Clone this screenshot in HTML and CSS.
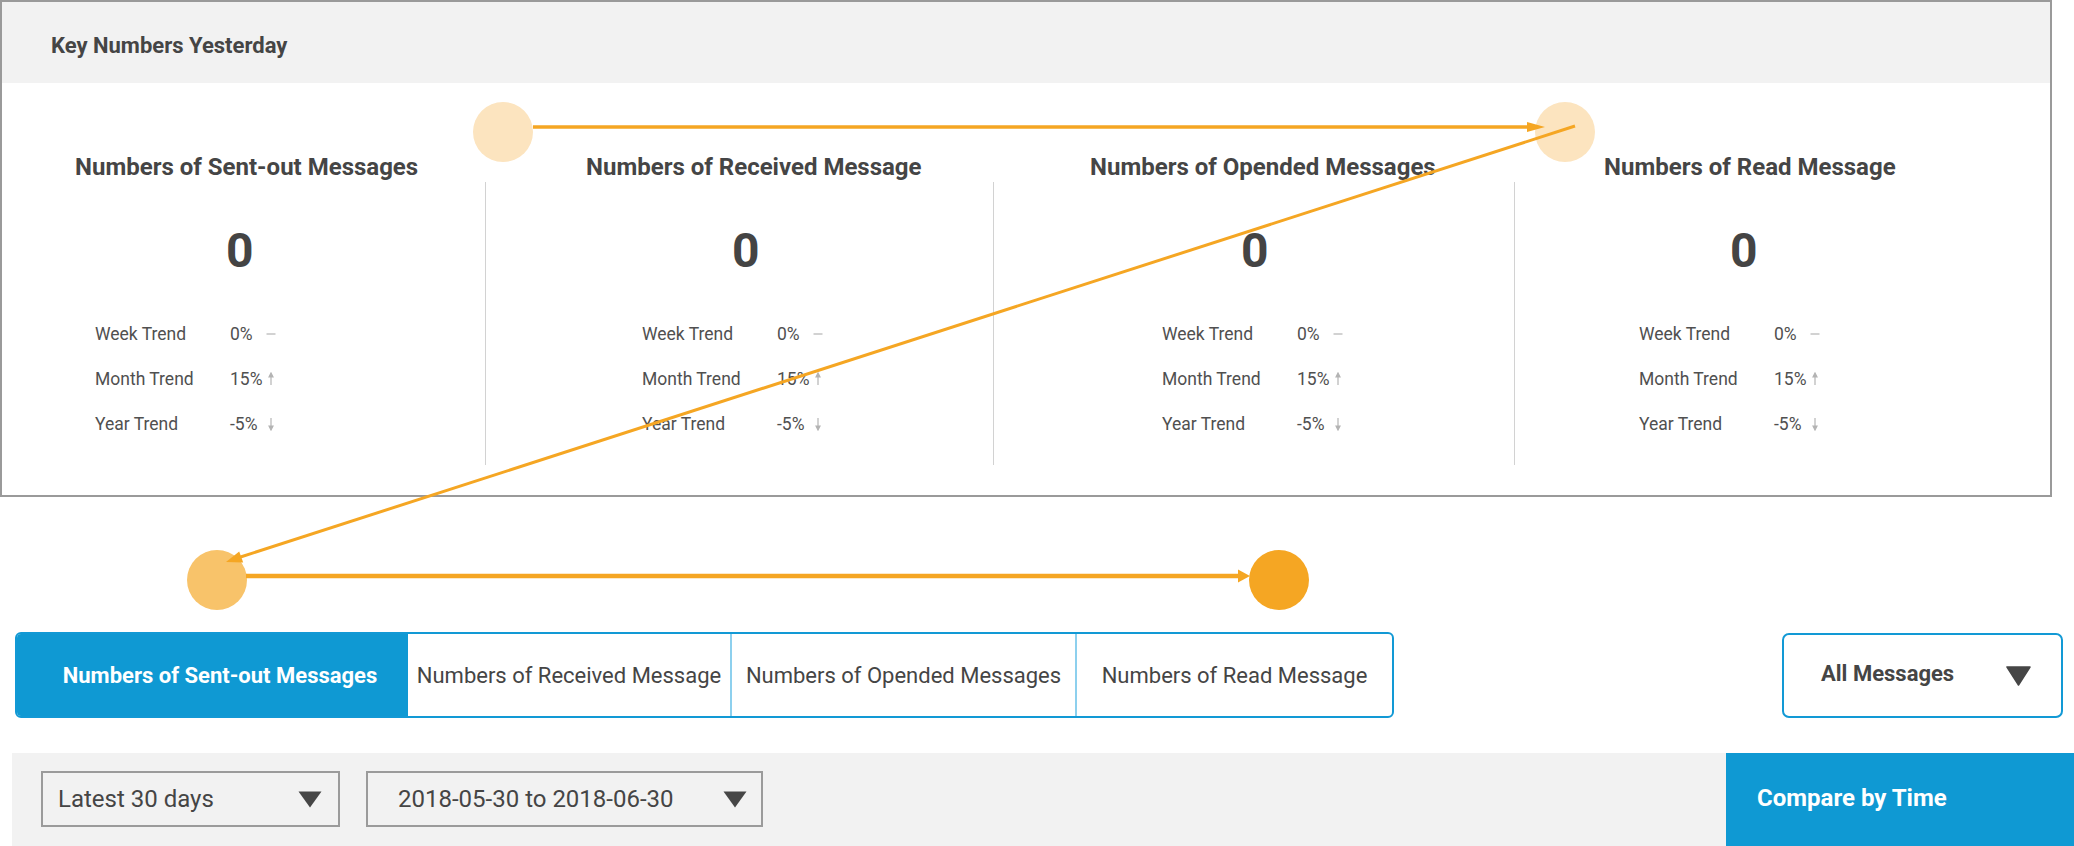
FILE: index.html
```html
<!DOCTYPE html>
<html lang="en">
<head>
<meta charset="utf-8">
<title>Key Numbers</title>
<link rel="stylesheet" href="styles.css">
</head>
<body>
<section class="card">
  <header class="card-head">Key Numbers Yesterday</header>
  <div class="stats">
    <div class="stat col-1">
      <h3 class="stat-title">Numbers of Sent-out Messages</h3>
      <div class="stat-body">
        <div class="stat-value">0</div>
        <div class="trends">
          <span class="t-label">Week Trend</span><span class="t-val">0%</span><svg class="t-icon" viewBox="0 0 10 14"><line x1="0.5" y1="7" x2="9.5" y2="7"/></svg>
          <span class="t-label">Month Trend</span><span class="t-val">15%</span><svg class="t-icon" viewBox="0 0 10 14"><line x1="5" y1="4" x2="5" y2="13"/><polygon points="3,5 5,1 7,5"/></svg>
          <span class="t-label">Year Trend</span><span class="t-val">-5%</span><svg class="t-icon" viewBox="0 0 10 14"><line x1="5" y1="1" x2="5" y2="10"/><polygon points="3,9 5,13 7,9"/></svg>
        </div>
      </div>
    </div>
    <div class="stat col-2">
      <h3 class="stat-title">Numbers of Received Message</h3>
      <div class="stat-body">
        <div class="stat-value">0</div>
        <div class="trends">
          <span class="t-label">Week Trend</span><span class="t-val">0%</span><svg class="t-icon" viewBox="0 0 10 14"><line x1="0.5" y1="7" x2="9.5" y2="7"/></svg>
          <span class="t-label">Month Trend</span><span class="t-val">15%</span><svg class="t-icon" viewBox="0 0 10 14"><line x1="5" y1="4" x2="5" y2="13"/><polygon points="3,5 5,1 7,5"/></svg>
          <span class="t-label">Year Trend</span><span class="t-val">-5%</span><svg class="t-icon" viewBox="0 0 10 14"><line x1="5" y1="1" x2="5" y2="10"/><polygon points="3,9 5,13 7,9"/></svg>
        </div>
      </div>
    </div>
    <div class="stat col-3">
      <h3 class="stat-title">Numbers of Opended Messages</h3>
      <div class="stat-body">
        <div class="stat-value">0</div>
        <div class="trends">
          <span class="t-label">Week Trend</span><span class="t-val">0%</span><svg class="t-icon" viewBox="0 0 10 14"><line x1="0.5" y1="7" x2="9.5" y2="7"/></svg>
          <span class="t-label">Month Trend</span><span class="t-val">15%</span><svg class="t-icon" viewBox="0 0 10 14"><line x1="5" y1="4" x2="5" y2="13"/><polygon points="3,5 5,1 7,5"/></svg>
          <span class="t-label">Year Trend</span><span class="t-val">-5%</span><svg class="t-icon" viewBox="0 0 10 14"><line x1="5" y1="1" x2="5" y2="10"/><polygon points="3,9 5,13 7,9"/></svg>
        </div>
      </div>
    </div>
    <div class="stat col-4">
      <h3 class="stat-title">Numbers of Read Message</h3>
      <div class="stat-body">
        <div class="stat-value">0</div>
        <div class="trends">
          <span class="t-label">Week Trend</span><span class="t-val">0%</span><svg class="t-icon" viewBox="0 0 10 14"><line x1="0.5" y1="7" x2="9.5" y2="7"/></svg>
          <span class="t-label">Month Trend</span><span class="t-val">15%</span><svg class="t-icon" viewBox="0 0 10 14"><line x1="5" y1="4" x2="5" y2="13"/><polygon points="3,5 5,1 7,5"/></svg>
          <span class="t-label">Year Trend</span><span class="t-val">-5%</span><svg class="t-icon" viewBox="0 0 10 14"><line x1="5" y1="1" x2="5" y2="10"/><polygon points="3,9 5,13 7,9"/></svg>
        </div>
      </div>
    </div>
  </div>
</section>

<div class="tab-row">
  <nav class="tabs">
    <div class="tab tab-active t1">Numbers of Sent-out Messages</div>
    <div class="tab t2">Numbers of Received Message</div>
    <div class="tab t3">Numbers of Opended Messages</div>
    <div class="tab t4">Numbers of Read Message</div>
  </nav>
  <div class="msg-select">
    <span>All Messages</span>
    <svg class="caret-big" viewBox="0 0 25 20"><polygon points="1,1 24,1 12.5,19"/></svg>
  </div>
</div>

<div class="filter-bar">
  <div class="filters">
    <div class="select sel-range">
      <span>Latest 30 days</span>
      <svg class="caret" viewBox="0 0 24 17"><polygon points="0.5,0.5 23.5,0.5 12,16.5"/></svg>
    </div>
    <div class="select sel-dates">
      <span>2018-05-30 to 2018-06-30</span>
      <svg class="caret" viewBox="0 0 24 17"><polygon points="0.5,0.5 23.5,0.5 12,16.5"/></svg>
    </div>
  </div>
  <div class="compare">Compare by Time</div>
</div>

<svg class="flow" viewBox="0 0 2074 846" width="2074" height="846">
  <circle cx="503" cy="132" r="30" fill="#fce4bf"/>
  <circle cx="1565" cy="132" r="30" fill="#fce4bf"/>
  <circle cx="217" cy="580" r="30" fill="#f8c36a"/>
  <circle cx="1279" cy="580" r="30" fill="#f5a623"/>
  <line x1="533" y1="127" x2="1530" y2="127" stroke="#f5a623" stroke-width="3.5"/>
  <polygon points="1527,122 1545,127 1527,132" fill="#f5a623"/>
  <line x1="1575" y1="126" x2="239" y2="557.5" stroke="#f5a623" stroke-width="3"/>
  <polygon points="226,562 243.2,562.6 239.2,551.6" fill="#f5a623"/>
  <line x1="246" y1="576" x2="1241" y2="576" stroke="#f5a623" stroke-width="4.5"/>
  <polygon points="1238,569.5 1250,576 1238,582.5" fill="#f5a623"/>
</svg>
</body>
</html>
```

FILE: styles.css
```css
* { box-sizing: border-box; }

html, body {
  margin: 0;
  padding: 0;
}

body {
  position: relative;
  width: 2074px;
  height: 846px;
  overflow: hidden;
  font-family: Roboto, "Liberation Sans", Arial, sans-serif;
  color: #464646;
  background: #fff;
}

/* ---------- Key numbers card ---------- */
.card {
  width: 2052px;
  border: 2px solid #9a9a9a;
  background: #fff;
}

.card-head {
  height: 81px;
  padding: 6px 0 0 49px;
  display: flex;
  align-items: center;
  background: #f2f2f2;
  font-size: 22px;
  font-weight: 700;
  color: #454545;
}

.stats {
  display: grid;
  grid-template-columns: 483px 508px 521px 536px;
  padding: 69px 0 30px;
}

.stat {
  display: flex;
  flex-direction: column;
}

.stat-title {
  margin: 0;
  height: 30px;
  line-height: 30px;
  padding-left: var(--title-x);
  font-size: 24px;
  font-weight: 700;
  color: #454545;
  white-space: nowrap;
}

.stat-body {
  height: 283px;
  padding-top: 45px;
}

.col-2 .stat-body,
.col-3 .stat-body,
.col-4 .stat-body {
  border-left: 1px solid #d2d2d2;
}

.col-1 { --title-x: 73px; --zero-x: 224px; --trend-x: 93px; }
.col-2 { --title-x: 101px; --zero-x: 246px; --trend-x: 156px; }
.col-3 { --title-x: 97px; --zero-x: 247px; --trend-x: 168px; }
.col-4 { --title-x: 90px; --zero-x: 215px; --trend-x: 124px; }

.stat-value {
  height: 48px;
  line-height: 48px;
  padding-left: var(--zero-x);
  font-size: 48px;
  font-weight: 700;
  color: #444;
}

.trends {
  margin-top: 36px;
  margin-left: var(--trend-x);
  display: grid;
  grid-template-columns: 135px 36px 10px;
  grid-auto-rows: 45px;
  align-items: center;
  font-size: 17.5px;
  color: #505050;
}

.t-icon {
  width: 10px;
  height: 14px;
  stroke: #b4b4b4;
  stroke-width: 1.2;
  fill: #b4b4b4;
}

/* ---------- Tabs row ---------- */
.tab-row {
  margin-top: 135px;
  display: flex;
  align-items: flex-start;
  justify-content: space-between;
  padding: 0 11px 0 15px;
}

.tabs {
  display: flex;
  height: 86px;
  border: 2px solid #1299d5;
  border-radius: 6px;
  overflow: hidden;
  background: #fff;
}

.tab {
  display: flex;
  align-items: center;
  justify-content: center;
  font-size: 22px;
  color: #454545;
  white-space: nowrap;
  border-right: 2px solid #8dd0ee;
}

.tab-active {
  background: #0f99d3;
  color: #fff;
  font-weight: 700;
  border-right: none;
  padding-left: 15px;
}

.t1 { width: 391px; }
.t2 { width: 324px; }
.t3 { width: 345px; }
.t4 { width: 315px; border-right: none; }

.msg-select {
  margin-top: 1px;
  width: 281px;
  height: 85px;
  border: 2px solid #1299d5;
  border-radius: 7px;
  display: flex;
  align-items: center;
  justify-content: space-between;
  padding: 0 30px 4px 37px;
  font-size: 22px;
  font-weight: 700;
  color: #454545;
}

.caret-big {
  width: 25px;
  height: 20px;
  margin-top: 4px;
  fill: #464646;
  stroke: #464646;
  stroke-width: 1.5;
  stroke-linejoin: round;
}

/* ---------- Filter bar ---------- */
.filter-bar {
  margin: 35px 0 0 12px;
  height: 93px;
  display: flex;
  background: #f2f2f2;
}

.filters {
  flex: 1;
  display: flex;
  gap: 26px;
  padding: 18px 0 0 29px;
}

.select {
  height: 56px;
  border: 2px solid #9b9b9b;
  display: flex;
  align-items: center;
  justify-content: space-between;
  font-size: 24px;
  color: #454545;
}

.sel-range { width: 299px; padding: 0 16px 0 15px; }
.sel-dates { width: 397px; padding: 0 14px 0 30px; }

.caret {
  width: 24px;
  height: 17px;
  fill: #464646;
}

.compare {
  width: 348px;
  background: #0f99d3;
  color: #fff;
  font-size: 24px;
  font-weight: 700;
  display: flex;
  align-items: center;
  padding: 0 0 3px 31px;
}

/* ---------- Flow overlay ---------- */
.flow {
  position: absolute;
  top: 0;
  left: 0;
  pointer-events: none;
}
```
